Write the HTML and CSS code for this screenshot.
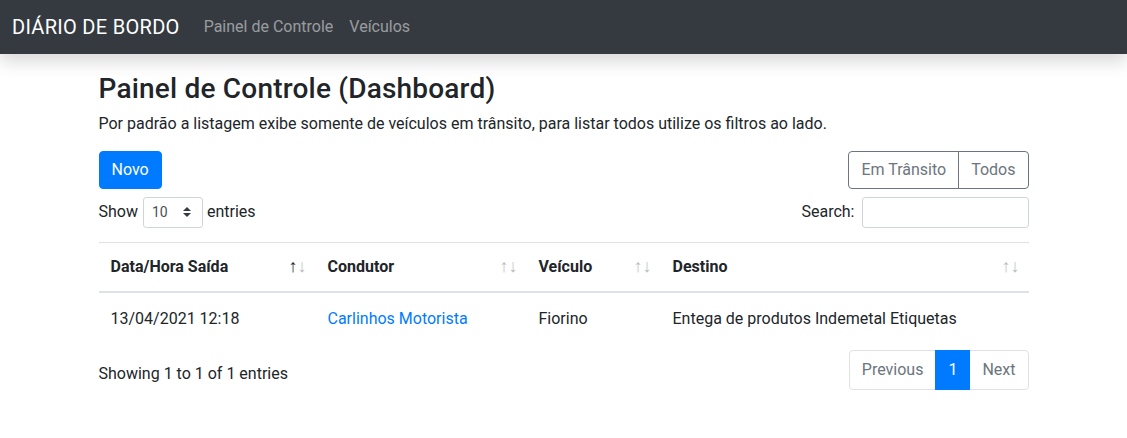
FILE: index.html
```html
<!DOCTYPE html>
<html lang="pt-BR">
<head>
<meta charset="utf-8">
<title>Diário de Bordo</title>
<link rel="stylesheet" href="styles.css">
</head>
<body>
<nav class="navbar">
  <a class="brand" href="#">DIÁRIO DE BORDO</a>
  <ul class="nav">
    <li><a class="nav-link" href="#">Painel de Controle</a></li>
    <li><a class="nav-link" href="#">Veículos</a></li>
  </ul>
</nav>

<main class="container">
  <h3 class="title">Painel de Controle (Dashboard)</h3>
  <p class="intro">Por padrão a listagem exibe somente de veículos em trânsito, para listar todos utilize os filtros ao lado.</p>

  <div class="toolbar">
    <button class="btn btn-primary" type="button">Novo</button>
    <div class="btn-group">
      <button class="btn btn-outline" type="button">Em Trânsito</button>
      <button class="btn btn-outline" type="button">Todos</button>
    </div>
  </div>

  <div class="dt-top">
    <label class="dt-length">Show
      <span class="select-wrap">
        <select class="select-sm"><option>10</option><option>25</option><option>50</option><option>100</option></select>
        <svg class="select-arrow" width="8" height="10" viewBox="0 0 4 5"><path fill="#343a40" d="M2 0L0 2h4zm0 5L0 3h4z"/></svg>
      </span>
      entries</label>
    <label class="dt-filter">Search:<input class="input-sm" type="search"></label>
  </div>

  <table class="table">
    <colgroup>
      <col class="w-date"><col class="w-driver"><col class="w-vehicle"><col class="w-dest">
    </colgroup>
    <thead>
      <tr>
        <th class="sort sort-asc">Data/Hora Saída</th>
        <th class="sort">Condutor</th>
        <th class="sort">Veículo</th>
        <th class="sort">Destino</th>
      </tr>
    </thead>
    <tbody>
      <tr>
        <td>13/04/2021 12:18</td>
        <td><a class="link" href="#">Carlinhos Motorista</a></td>
        <td>Fiorino</td>
        <td>Entega de produtos Indemetal Etiquetas</td>
      </tr>
    </tbody>
  </table>

  <div class="dt-bottom">
    <div class="dt-info">Showing 1 to 1 of 1 entries</div>
    <ul class="pagination">
      <li class="page-item disabled"><a class="page-link first" href="#">Previous</a></li>
      <li class="page-item active"><a class="page-link" href="#">1</a></li>
      <li class="page-item disabled"><a class="page-link last" href="#">Next</a></li>
    </ul>
  </div>
</main>
</body>
</html>
```
FILE: styles.css
```css
*, *::before, *::after { box-sizing: border-box; }

body {
  margin: 0;
  font-family: Roboto, "Noto Sans", sans-serif;
  font-size: 16px;
  line-height: 1.5;
  color: #212529;
  background: #fff;
}

a { text-decoration: none; }

/* Navbar */
.navbar {
  display: flex;
  align-items: center;
  height: 54px;
  padding: 0 16px 0 12px;
  background: #343a40;
  box-shadow: 0 8px 16px rgba(0,0,0,.15);
  position: relative;
  z-index: 2;
}
.brand {
  font-size: 20px;
  line-height: 30px;
  padding: 5px 0;
  margin-right: 16px;
  color: #fff;
  letter-spacing: 0.3px;
}
.nav {
  display: flex;
  list-style: none;
  margin: 0;
  padding: 0;
}
.nav-link {
  display: block;
  padding: 8px;
  color: rgba(255,255,255,.5);
}

/* Container */
.container {
  width: 960px;
  margin: 0 auto;
  padding: 18px 15px 0;
}

.title {
  margin: 0 0 6px;
  font-size: 28px;
  font-weight: 500;
  line-height: 1.2;
  letter-spacing: 0.2px;
}
.intro {
  margin: 0 0 15px;
}

/* Buttons */
.toolbar {
  display: flex;
  justify-content: space-between;
  align-items: flex-start;
}
.btn {
  display: inline-block;
  font-family: inherit;
  font-size: 16px;
  line-height: 1.5;
  padding: 6px 12px;
  border: 1px solid transparent;
  border-radius: 4px;
  background: transparent;
  cursor: pointer;
}
.btn-primary {
  color: #fff;
  background: #007bff;
  border-color: #007bff;
}
.btn-group { display: flex; }
.btn-outline {
  color: #6c757d;
  border-color: #6c757d;
}
.btn-group .btn-outline:first-child {
  border-top-right-radius: 0;
  border-bottom-right-radius: 0;
}
.btn-group .btn-outline + .btn-outline {
  margin-left: -1px;
  border-top-left-radius: 0;
  border-bottom-left-radius: 0;
}

/* DataTables top */
.dt-top {
  display: flex;
  justify-content: space-between;
  align-items: center;
  margin-top: 8px;
  margin-bottom: 14px;
}
.dt-length, .dt-filter {
  display: flex;
  align-items: center;
  white-space: nowrap;
}
.select-wrap {
  position: relative;
  display: inline-block;
  margin: 0 4px 0 5px;
}
.select-sm {
  -webkit-appearance: none;
  appearance: none;
  display: block;
  width: 60px;
  height: 31px;
  padding: 4px 28px 4px 8px;
  font-family: inherit;
  font-size: 14px;
  line-height: 1.5;
  color: #495057;
  background: #fff;
  border: 1px solid #ced4da;
  border-radius: 3.2px;
}
.select-arrow {
  position: absolute;
  right: 12px;
  top: 10px;
  pointer-events: none;
}
.input-sm {
  display: block;
  width: 167px;
  height: 31px;
  margin-left: 7px;
  padding: 4px 8px;
  font-size: 14px;
  color: #495057;
  border: 1px solid #ced4da;
  border-radius: 3.2px;
}

/* Table */
.table {
  width: 100%;
  border-collapse: collapse;
  table-layout: fixed;
  margin: 0;
}
.w-date { width: 217px; }
.w-driver { width: 211px; }
.w-vehicle { width: 134px; }
.w-dest { width: auto; }

.table th, .table td {
  padding: 12px;
  text-align: left;
  vertical-align: top;
  border-top: 1px solid #dee2e6;
}
.table th {
  font-weight: 700;
  border-bottom: 2px solid #dee2e6;
}
.table td {
  border-top: 0;
  padding: 14px 12px 10px;
}

.sort {
  position: relative;
  padding-right: 30px;
}
.sort::before, .sort::after {
  position: absolute;
  bottom: 16px;
  display: block;
  font-family: "Liberation Sans", sans-serif;
  font-size: 18px;
  font-weight: 400;
  line-height: 1;
  opacity: .3;
}
.sort::before { content: "\2191"; right: 18px; }
.sort::after { content: "\2193"; right: 9px; }
.sort-asc::before { opacity: 1; }

.link { color: #007bff; }

/* DataTables bottom */
.dt-bottom {
  display: flex;
  justify-content: space-between;
  align-items: flex-start;
  padding-top: 7px;
}
.dt-info {
  padding-top: 14px;
  white-space: nowrap;
}
.pagination {
  display: flex;
  list-style: none;
  margin: 2px 0;
  padding: 0;
}
.page-link {
  display: block;
  padding: 7px 12px;
  line-height: 1.5;
  border: 1px solid #dee2e6;
  color: #6c757d;
  background: #fff;
  margin-left: -1px;
}
.page-link.first {
  margin-left: 0;
  border-radius: 4px 0 0 4px;
}
.page-link.last {
  border-radius: 0 4px 4px 0;
}
.page-item.active .page-link {
  color: #fff;
  background: #007bff;
  border-color: #007bff;
  position: relative;
  z-index: 1;
}
```
